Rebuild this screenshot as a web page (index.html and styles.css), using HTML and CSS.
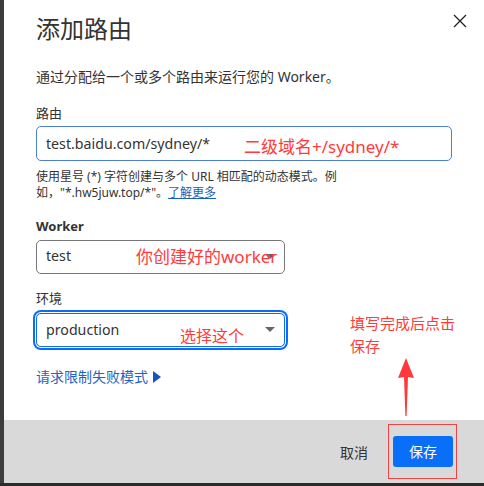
FILE: index.html
```html
<!DOCTYPE html>
<html lang="zh">
<head>
<meta charset="utf-8">
<link rel="stylesheet" href="styles.css">
</head>
<body>
<div class="page">
  <div class="backdrop"></div>
  <div class="modal">
    <div class="body">
      <div class="head">
        <h1 class="title">添加路由</h1>
        <svg class="close" width="14" height="14" viewBox="0 0 14 14"><path d="M1 1L13 13M13 1L1 13" stroke="#222" stroke-width="1.3" fill="none"/></svg>
      </div>
      <p class="desc">通过分配给一个或多个路由来运行您的 Worker。</p>

      <label class="label">路由</label>
      <div class="input route">test.baidu.com/sydney/*</div>
      <p class="help">使用星号 (*) 字符创建与多个 URL 相匹配的动态模式。例如，"*.hw5juw.top/*"。<a class="more">了解更多</a></p>

      <label class="label bold">Worker</label>
      <div class="input select">test<span class="caret"></span></div>

      <label class="label env">环境</label>
      <div class="input select focus">production<span class="caret"></span></div>

      <a class="toggle">请求限制失败模式 <span class="tri"></span></a>
    </div>
    <div class="footer">
      <span class="cancel">取消</span>
      <span class="save">保存</span>
    </div>

    <span class="note n1">二级域名+/sydney/*</span>
    <span class="note n2">你创建好的worker</span>
    <span class="note n3">选择这个</span>
    <span class="note n4">填写完成后点击<br>保存</span>
    <svg class="arrow" width="18" height="60" viewBox="0 0 18 60"><path d="M9 0L17 20L11 19L9.6 58L8.4 58L7 19L1 20Z" fill="#ff3a3a"/></svg>
    <span class="box"></span>
  </div>
</div>
</body>
</html>
```
FILE: styles.css
```css
html, body { margin: 0; padding: 0; }
body {
  background: #2b2b2b;
  font-family: "Noto Sans", "Noto Sans CJK SC", sans-serif;
  color: #333;
  width: 484px;
  height: 486px;
  overflow: hidden;
}
.page { display: flex; height: 483px; }
.backdrop { width: 5px; background: #3d3d3d; }
.modal {
  flex: 1;
  position: relative;
  background: #fff;
  display: flex;
  flex-direction: column;
}
.body { flex: 1; padding: 0 32px; display: flex; flex-direction: column; align-items: flex-start; }
.head { display: flex; justify-content: space-between; width: 100%; }
.title {
  margin: 13px 0 0;
  font-size: 24px;
  font-weight: 400;
  line-height: 32px;
  color: #333;
}
.close { margin: 14px -15px 0 0; }
.desc { margin: 22px 0 0; font-size: 14px; line-height: 20px; color: #333; }
.label { margin-top: 17px; font-size: 13px; line-height: 18px; color: #333; }
.label.bold { font-weight: 700; margin-top: 16px; }
.label.env { margin-top: 15px; }
.input {
  box-sizing: border-box;
  margin-top: 4px;
  border: 1px solid #777;
  border-radius: 5px;
  height: 35px;
  padding: 0 9px;
  font-size: 14.2px;
  line-height: 33px;
  color: #333;
  position: relative;
}
.route { width: 416px; border-color: #4b7fcf; }
.select { width: 249px; height: 34px; line-height: 30px; margin-top: 5px; }
.select.focus {
  border: 1px solid #0b6cf5;
  box-shadow: 0 0 0 1px #fff, 0 0 0 3px #0b6cf5;
  margin-top: 6px;
  line-height: 32px;
}
.caret {
  position: absolute;
  right: 9px;
  top: 13px;
  width: 0; height: 0;
  border-left: 5px solid transparent;
  border-right: 5px solid transparent;
  border-top: 5px solid #666;
}
.help { margin: 8px 0 0; font-size: 12px; line-height: 16px; color: #333; width: 330px; }
.more { color: #1a5fb4; text-decoration: underline; }
.toggle { margin-top: 20px; font-size: 14px; line-height: 20px; color: #1e63c2; display: flex; align-items: center; gap: 5px; }
.tri {
  width: 0; height: 0;
  border-top: 6px solid transparent;
  border-bottom: 6px solid transparent;
  border-left: 8px solid #1753c0;
}
.footer {
  height: 63px;
  background: #d9d9d9;
  display: flex;
  align-items: center;
  justify-content: flex-end;
  padding: 0 31px 0 0;
  gap: 25px;
  margin-top: auto;
}
.cancel { font-size: 14px; color: #333; margin-top: 0; }
.save {
  background: #0a6ff8;
  color: #fff;
  font-size: 14px;
  border-radius: 3px;
  width: 60px;
  height: 31px;
  line-height: 31px;
  text-align: center;
  margin-top: 0;
}
.note {
  position: absolute;
  color: #ff3b3b;
  font-size: 16px;
  line-height: 20px;
  white-space: nowrap;
}
.n1 { left: 240px; top: 137px; font-size: 17px; }
.n2 { left: 132px; top: 247px; font-size: 17px; }
.n3 { left: 176px; top: 326px; }
.n4 { left: 346px; top: 312px; font-size: 15px; line-height: 23px; }
.arrow { position: absolute; left: 393px; top: 358px; }
.box {
  position: absolute;
  left: 384px;
  top: 424px;
  width: 67px;
  height: 53px;
  border: 1px solid #ee4444;
}
```
